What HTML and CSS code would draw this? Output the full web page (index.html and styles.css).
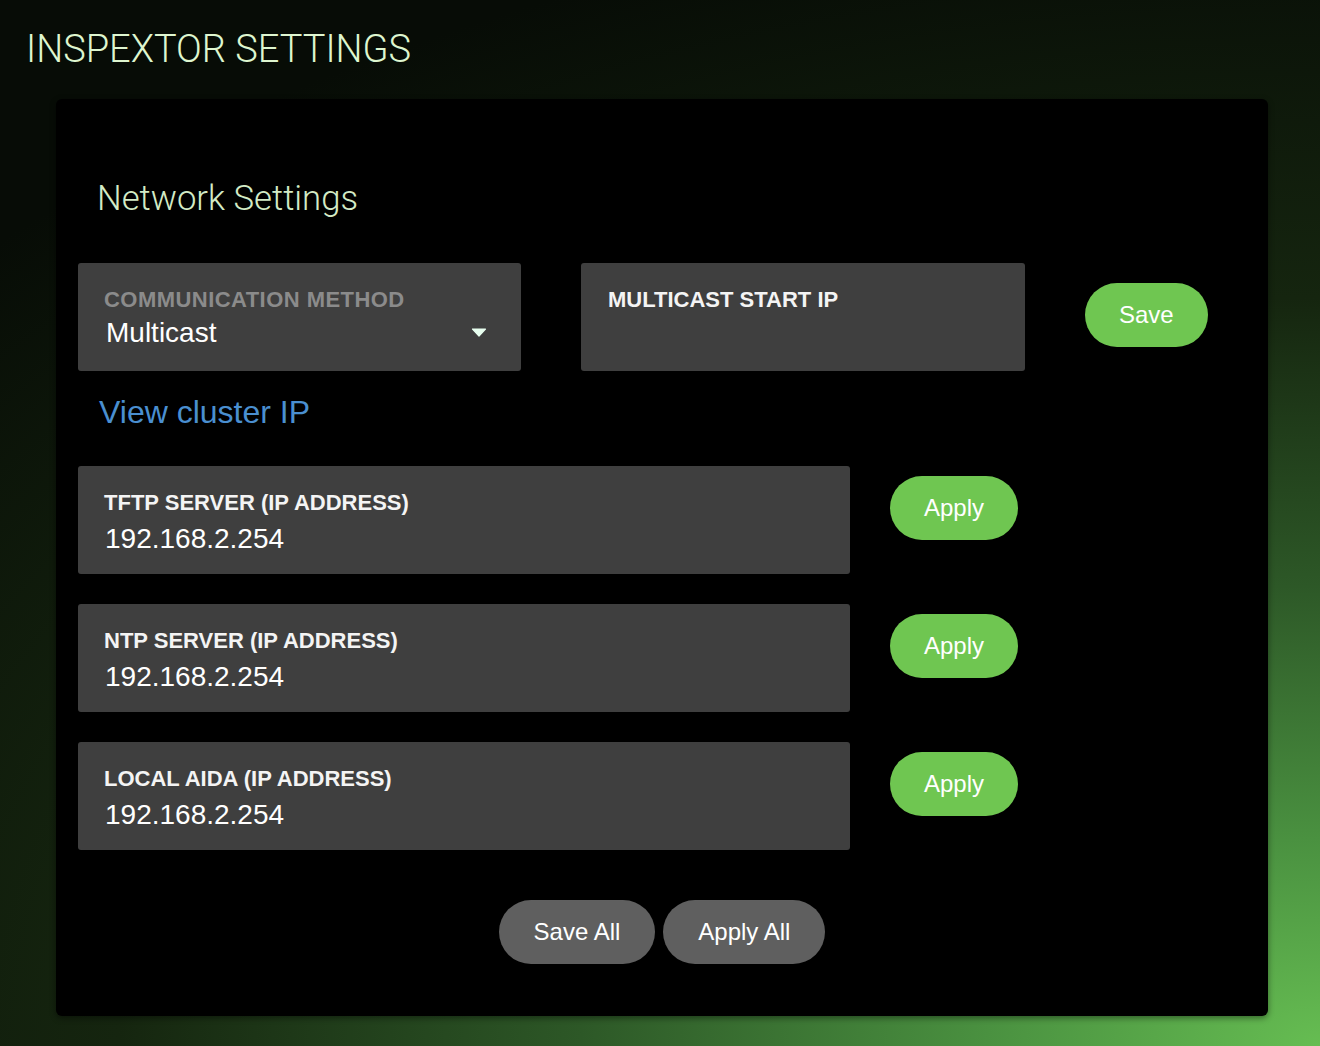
FILE: index.html
```html
<!DOCTYPE html>
<html lang="en">
<head>
<meta charset="utf-8">
<title>Inspextor Settings</title>
<link rel="stylesheet" href="styles.css">
</head>
<body>
<div class="page">
  <h1 class="page-title">INSPEXTOR SETTINGS</h1>
  <main class="card">
    <h2 class="section-title">Network Settings</h2>

    <div class="row row-top">
      <div class="field field-half">
        <div class="field-label muted">COMMUNICATION METHOD</div>
        <div class="select-value">
          <span class="field-value select-text">Multicast</span>
          <svg class="caret" width="16" height="9" viewBox="0 0 16 9"><path d="M1.5 1 L14.5 1 L8 8 Z" fill="#e8fff0" stroke="#e8fff0" stroke-width="1.2" stroke-linejoin="round"/></svg>
        </div>
      </div>
      <div class="field field-half field-half-right">
        <div class="field-label">MULTICAST START IP</div>
      </div>
      <button class="btn btn-green btn-save">Save</button>
    </div>

    <a class="cluster-link" href="#">View cluster IP</a>

    <div class="rows">
      <div class="row">
        <div class="field field-wide">
          <div class="field-label">TFTP SERVER (IP ADDRESS)</div>
          <div class="field-value">192.168.2.254</div>
        </div>
        <button class="btn btn-green btn-apply">Apply</button>
      </div>
      <div class="row">
        <div class="field field-wide">
          <div class="field-label">NTP SERVER (IP ADDRESS)</div>
          <div class="field-value">192.168.2.254</div>
        </div>
        <button class="btn btn-green btn-apply">Apply</button>
      </div>
      <div class="row">
        <div class="field field-wide">
          <div class="field-label">LOCAL AIDA (IP ADDRESS)</div>
          <div class="field-value">192.168.2.254</div>
        </div>
        <button class="btn btn-green btn-apply">Apply</button>
      </div>
    </div>

    <div class="actions">
      <button class="btn btn-grey">Save All</button>
      <button class="btn btn-grey">Apply All</button>
    </div>
  </main>
</div>
</body>
</html>
```

FILE: styles.css
```css
html, body {
  margin: 0;
  padding: 0;
}

body {
  width: 1320px;
  height: 1046px;
  overflow: hidden;
  font-family: "Liberation Sans", Arial, sans-serif;
  background: radial-gradient(ellipse 140% 110% at 100% 100%,
    #66bd52 0%, #4a9140 18%, #2d5827 40%, #15250f 65%, #070c06 100%);
}

.page {
  padding: 27px 0 0 0;
}

.page-title {
  margin: 0 0 28px 26px;
  font-family: Roboto, "Liberation Sans", sans-serif;
  font-weight: 300;
  font-size: 38px;
  line-height: normal;
  color: #def6cf;
  letter-spacing: 0;
}

.card {
  box-sizing: border-box;
  margin-left: 56px;
  width: 1212px;
  height: 917px;
  background: #000;
  border-radius: 6px;
  box-shadow: 0 2px 6px rgba(0, 0, 0, 0.45);
  padding: 79px 22px 0 22px;
  display: flex;
  flex-direction: column;
  align-items: flex-start;
}

.section-title {
  margin: 0 0 45px 19px;
  font-family: Roboto, "Liberation Sans", sans-serif;
  font-weight: 300;
  font-size: 34.7px;
  line-height: normal;
  color: #d3ebc6;
}

.row {
  display: flex;
  align-items: flex-start;
}

.row-top {
  gap: 60px;
}

.rows {
  display: flex;
  flex-direction: column;
  gap: 30px;
}

.field {
  box-sizing: border-box;
  height: 108px;
  background: #3f3f3f;
  border-radius: 3px;
  padding: 24px 26px 0 26px;
}

.field-half {
  width: 443px;
}

.field-half-right {
  width: 444px;
  padding-left: 27px;
}

.field-wide {
  width: 772px;
}

.field-label {
  font-weight: 700;
  font-size: 22px;
  line-height: normal;
  color: #f4f4f4;
  white-space: nowrap;
}

.field-label.muted {
  color: #8b8b8b;
  letter-spacing: 0.45px;
}

.field-value {
  margin-top: 7px;
  margin-left: 1px;
  font-size: 28px;
  line-height: normal;
  color: #fff;
}

.select-value {
  display: flex;
  align-items: center;
  justify-content: space-between;
  padding-right: 8px;
}

.select-text {
  margin-top: 4px;
  margin-left: 2px;
}

.caret {
  display: block;
  margin-top: 3px;
}

.btn {
  box-sizing: border-box;
  height: 64px;
  padding: 0 34px;
  border: none;
  border-radius: 32px;
  font-family: "Liberation Sans", Arial, sans-serif;
  font-size: 24px;
  color: #fff;
  cursor: pointer;
  white-space: nowrap;
}

.btn-green {
  background: #6fc651;
}

.btn-grey {
  background: #5f5f5f;
  padding: 0 35px;
}

.btn-save {
  margin-top: 20px;
}

.btn-apply {
  margin-left: 40px;
  margin-top: 10px;
}

.cluster-link {
  margin: 23px 0 35px 21px;
  font-size: 32px;
  line-height: normal;
  color: #4a8fd0;
  text-decoration: none;
}

.actions {
  align-self: center;
  display: flex;
  gap: 8px;
  margin-top: 50px;
}
```
